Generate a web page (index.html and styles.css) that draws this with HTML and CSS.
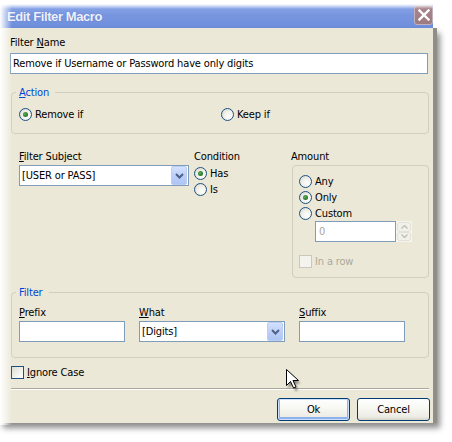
FILE: index.html
```html
<!DOCTYPE html>
<html>
<head>
<meta charset="utf-8">
<title>Edit Filter Macro</title>
<link rel="stylesheet" href="styles.css">
</head>
<body>
<div class="window">
  <div class="titlebar">
    <span class="title">Edit Filter Macro</span>
    <span class="close"><svg width="12" height="12" viewBox="0 0 12 12"><path d="M1.5 1.5 L10.5 10.5 M10.5 1.5 L1.5 10.5" stroke="#fff" stroke-width="2.4" stroke-linecap="square"/></svg></span>
  </div>
  <div class="body">
    <div class="label">Filter <u>N</u>ame</div>
    <div class="textbox wide">Remove if Username or Password have only digits</div>

    <fieldset class="group action">
      <legend><u>A</u>ction</legend>
      <div class="action-row">
        <div class="opt"><span class="radio on"></span>Remove if</div>
        <div class="opt"><span class="radio"></span>Keep if</div>
      </div>
    </fieldset>

    <div class="criteria">
      <div class="col subject">
        <div class="label tight"><u>F</u>ilter Subject</div>
        <div class="select"><span class="val">[USER or PASS]</span><span class="dd"><svg width="9" height="6" viewBox="0 0 9 6"><path d="M1 1 L4.5 4.5 L8 1" fill="none" stroke="#4d6185" stroke-width="2"/></svg></span></div>
      </div>
      <div class="col condition">
        <div class="label tight">Condition</div>
        <div class="opt row"><span class="radio on"></span>Has</div>
        <div class="opt row"><span class="radio"></span>Is</div>
      </div>
      <div class="col amount">
        <div class="label tight">Amount</div>
        <div class="box">
          <div class="opt row"><span class="radio"></span>Any</div>
          <div class="opt row"><span class="radio on"></span>Only</div>
          <div class="opt row"><span class="radio"></span>Custom</div>
          <div class="spin">
            <div class="spin-input">0</div>
            <div class="spin-btns">
              <span class="sb"><svg width="7" height="4" viewBox="0 0 7 4"><path d="M0.5 3.5 L3.5 0.5 L6.5 3.5" fill="none" stroke="#c2c0b4" stroke-width="1.4"/></svg></span>
              <span class="sb"><svg width="7" height="4" viewBox="0 0 7 4"><path d="M0.5 0.5 L3.5 3.5 L6.5 0.5" fill="none" stroke="#c2c0b4" stroke-width="1.4"/></svg></span>
            </div>
          </div>
          <div class="opt row disabled inrow"><span class="check"></span>In a row</div>
        </div>
      </div>
    </div>

    <fieldset class="group filter">
      <legend>Filter</legend>
      <div class="filter-row">
        <div class="field small">
          <div class="label tight"><u>P</u>refix</div>
          <div class="textbox"></div>
        </div>
        <div class="field what">
          <div class="label tight"><u>W</u>hat</div>
          <div class="select"><span class="val">[Digits]</span><span class="dd"><svg width="9" height="6" viewBox="0 0 9 6"><path d="M1 1 L4.5 4.5 L8 1" fill="none" stroke="#4d6185" stroke-width="2"/></svg></span></div>
        </div>
        <div class="field small">
          <div class="label tight"><u>S</u>uffix</div>
          <div class="textbox"></div>
        </div>
      </div>
    </fieldset>

    <div class="opt row ignore"><span class="check"></span><span><u>I</u>gnore Case</span></div>

    <div class="sep"></div>

    <div class="buttons">
      <button class="btn default">Ok</button>
      <button class="btn">Cancel</button>
    </div>
  </div>
  <svg class="cursor" width="18" height="24" viewBox="0 0 18 24">
    <defs><filter id="blur" x="-50%" y="-50%" width="200%" height="200%"><feGaussianBlur stdDeviation="1.2"/></filter></defs>
    <path d="M2.5 3.5 L2.5 19.5 L6.5 15.5 L9.5 22 L12 21 L9 14.5 L14.5 14.5 Z" fill="rgba(0,0,0,0.45)" filter="url(#blur)"/>
    <path d="M0.5 0.5 L0.5 16.5 L4.5 12.5 L7.5 19 L10 18 L7 11.5 L12.5 11.5 Z" fill="#fff" stroke="#000" stroke-width="1" stroke-linejoin="miter"/>
  </svg>
</div>
</body>
</html>
```

FILE: styles.css
```css
* { box-sizing: border-box; }
html, body { margin: 0; padding: 0; background: #fff; }
body {
  font-family: "DejaVu Sans Condensed", "DejaVu Sans", sans-serif;
  font-stretch: condensed;
  font-size: 11px;
  line-height: 13px;
  letter-spacing: -0.15px;
  color: #000;
  width: 452px;
  height: 442px;
  overflow: hidden;
}
u { text-decoration: underline; text-underline-offset: 1px; }

.window {
  position: relative;
  width: 437px;
  margin-top: 4px;
}
.window::before {
  content: "";
  position: absolute;
  left: 0; top: 0; bottom: -2px;
  width: 12px;
  background: linear-gradient(to right, #fff 0%, rgba(255,255,255,0.6) 40%, rgba(255,255,255,0));
  z-index: 5;
}
.window::after {
  content: "";
  position: absolute;
  left: 0; top: 0; right: 0;
  height: 5px;
  background: linear-gradient(#fff, rgba(255,255,255,0));
  z-index: 5;
}

.titlebar {
  height: 24px;
  margin-right: 4px;
  background: linear-gradient(#8ca8ea 0%, #7896df 45%, #6e8edd 100%);
  display: flex;
  align-items: center;
  justify-content: space-between;
  padding-left: 7px;
}
.title {
  font-family: "Liberation Sans", Arial, sans-serif;
  font-stretch: normal;
  font-weight: bold;
  font-size: 13px;
  letter-spacing: -0.4px;
  color: #eef2fc;
  text-shadow: 0 0 1px rgba(60,80,160,0.5);
}
.close {
  align-self: flex-start;
  margin-top: 1px;
  width: 19px;
  height: 20px;
  background: linear-gradient(#a9878e, #9c7a80);
  border: 1px solid #c4b2ba;
  border-radius: 3px;
  display: flex;
  align-items: center;
  justify-content: center;
}

.body {
  height: 395px;
  background: #ebe8d8;
  border-right: 4px solid #8f8e89;
  box-shadow: 3px 5px 6px rgba(0,0,0,0.45);
  padding: 8px 4px 0 10px;
  display: flex;
  flex-direction: column;
  align-items: flex-start;
}

.label { height: 13px; margin-bottom: 4px; white-space: nowrap; }
.label.tight { margin-bottom: 2px; }

.textbox {
  height: 21px;
  border: 1px solid #7f9db9;
  background: #fff;
  padding: 0 2px;
  line-height: 19px;
  white-space: nowrap;
}
.textbox.wide { width: 418px; }

.group {
  margin: 0;
  margin-left: 1px;
  width: 418px;
  border: 1px solid #d0cebf;
  border-radius: 4px;
  min-width: 0;
}
.group legend {
  color: #0046d5;
  padding: 0 6px 0 3px;
  margin-left: -3px;
  line-height: 13px;
}
.group.action {
  margin-top: 12px;
  padding: 9px 7px 12px 7px;
}
.action-row {
  display: grid;
  grid-template-columns: 202px auto;
}

.opt {
  display: flex;
  align-items: center;
  gap: 3px;
  height: 13px;
  white-space: nowrap;
}
.opt.row { height: 16px; }

.radio {
  width: 13px;
  height: 13px;
  flex: none;
  border-radius: 50%;
  border: 1px solid #1c5180;
  background: radial-gradient(circle at 65% 65%, #fff 0%, #f2f1ea 45%, #d6d4c8 100%);
  position: relative;
}
.radio.on::after {
  content: "";
  position: absolute;
  left: 3px; top: 3px;
  width: 5px; height: 5px;
  border-radius: 50%;
  background: radial-gradient(circle at 40% 40%, #5fae5f, #2a7a2a 60%, #1f5f1f);
}
.check {
  width: 13px;
  height: 13px;
  flex: none;
  border: 1px solid #1c5180;
  background: linear-gradient(135deg, #dcdbd2 0%, #f4f4ef 60%, #fff 100%);
}

.criteria {
  margin-top: 16px;
  display: flex;
  align-items: flex-start;
}
.col.subject { margin-left: 9px; width: 170px; }
.col.condition { margin-left: 5px; width: 97px; }
.col.amount { width: 138px; }

.select {
  height: 21px;
  border: 1px solid #7f9db9;
  background: #fff;
  display: flex;
  align-items: center;
  padding: 1px 1px 1px 2px;
}
.col.subject .select { width: 170px; }
.select .val { flex: 1; white-space: nowrap; line-height: 13px; }
.select .dd {
  width: 16px;
  height: 19px;
  margin-top: -1px;
  margin-bottom: -1px;
  background: linear-gradient(#d3e0fd, #b9cdf7 60%, #aec5f4);
  border: 1px solid #bacdf4;
  border-radius: 2px;
  display: flex;
  align-items: center;
  justify-content: center;
}

.box {
  margin-left: 1px;
  width: 137px;
  border: 1px solid #d0cebf;
  border-radius: 4px;
  padding: 7px 6px 8px 6px;
}
.spin {
  margin-left: 16px;
  display: flex;
  height: 21px;
}
.spin-input {
  width: 81px;
  height: 21px;
  border: 1px solid #7f9db9;
  background: #fff;
  color: #aca899;
  padding-left: 3px;
  line-height: 19px;
}
.spin-btns {
  width: 16px;
  height: 21px;
  display: flex;
  flex-direction: column;
  border: 1px solid #f4f3ee;
  background: #fff;
}
.sb {
  flex: 1;
  display: flex;
  align-items: center;
  justify-content: center;
  background: #f1f0ea;
  border: 1px solid #e4e2d8;
  border-radius: 2px;
}
.opt.disabled { color: #aca899; }
.opt.disabled .check { border-color: #cac8bb; background: #f4f3ee; }
.inrow { margin-top: 11px; }

.group.filter {
  margin-top: 8px;
  padding: 7px 7px 15px 7px;
}
.filter-row {
  display: flex;
  gap: 14px;
}
.field.small { width: 106px; }
.field.small .textbox { width: 106px; }
.field.what { width: 146px; }
.field.what .select { width: 146px; }

.ignore { margin-top: 6px; margin-left: 1px; }

.sep {
  margin-top: 8px;
  margin-left: 1px;
  width: 418px;
  height: 2px;
  border-top: 1px solid #aca899;
  border-bottom: 1px solid #fff;
}

.buttons {
  margin-top: 8px;
  align-self: stretch;
  display: flex;
  justify-content: flex-end;
  gap: 7px;
  margin-right: -1px;
}
.btn {
  width: 73px;
  height: 23px;
  font-family: "DejaVu Sans Condensed", "DejaVu Sans", sans-serif;
  font-stretch: condensed;
  font-size: 11px;
  letter-spacing: -0.15px;
  color: #000;
  border: 1px solid #003c74;
  border-radius: 3px;
  background: linear-gradient(#ffffff 0%, #f6f6f1 50%, #ecebe4 85%, #d8d5c9 100%);
  padding: 0;
}
.btn.default {
  box-shadow: inset 0 0 0 1px #cde0fb, inset 0 -1px 0 2px #8fb2ec;
}

.cursor {
  position: absolute;
  left: 286px;
  top: 365px;
  z-index: 6;
}
```
